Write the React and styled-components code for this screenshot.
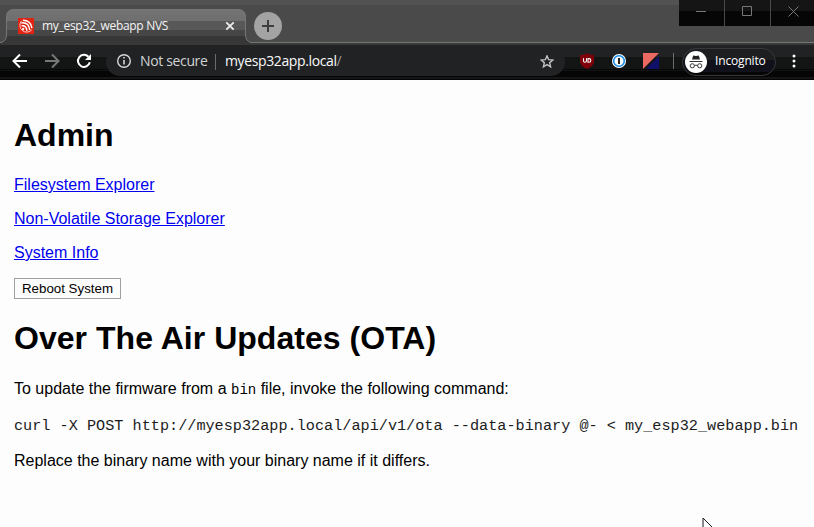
import React from "react";
import styled, { createGlobalStyle } from "styled-components";

const Global = createGlobalStyle`
  * { box-sizing: border-box; }
  body { margin: 0; background: #fdfdfd; overflow: hidden; font-family: "Liberation Sans", Arial, sans-serif; }
`;

const Window = styled.div`
  position: relative;
  display: flex;
  flex-direction: column;
  width: 814px;
  height: 527px;
  overflow: hidden;
`;
const TitleBar = styled.header`
  position: relative;
  display: flex;
  height: 45px;
  padding: 9px 0 0 6px;
  background: linear-gradient(#525252 0 5px, #4a4a4a 5px 42px, #757775 42px 43px, #383a39 43px 45px);
`;
const TabShape = styled.svg`
  position: absolute;
  left: 0;
  top: 0;
`;
const Tab = styled.div`
  position: relative;
  display: flex;
  align-items: center;
  width: 240px;
  height: 34px;
  padding: 0 10px 0 12px;
`;
const TabTitle = styled.span`
  flex: 1;
  margin-left: 8px;
  color: #f4f4f4;
  font: 12px/16px "Open Sans", "Noto Sans", sans-serif;
  letter-spacing: ${(p) => p.$spacing};
  white-space: nowrap;
`;
const NewTab = styled.div`
  display: flex;
  align-items: center;
  justify-content: center;
  width: 28px;
  height: 28px;
  margin: 3px 0 0 8px;
  border-radius: 50%;
  background: #a3a3a3;
`;
const WindowControls = styled.div`
  display: flex;
  gap: 1px;
  margin: -9px -2px 0 auto;
  height: 26px;
  background: #4a4a4a;
`;
const ControlButton = styled.div`
  display: flex;
  align-items: center;
  justify-content: center;
  width: 45px;
  padding-bottom: 3px;
  background: linear-gradient(#151515 0 11px, #060606 11px);
`;
const Toolbar = styled.nav`
  display: flex;
  align-items: center;
  height: 35px;
  padding: 0 12px 3px;
  background: linear-gradient(#202224 0 12px, #131414 12px 24px, #080808 24px 25px, #121212 25px 26px, #050505 26px 32px, #151515 32px 34px, #050505 34px);
`;
const NavIcon = styled.svg`
  flex: none;
  margin-right: ${(p) => p.$gap || "0"};
`;
const AddressBar = styled.div`
  display: flex;
  align-items: center;
  width: 459px;
  height: 28px;
  margin-top: 2px;
  padding: 0 11px 0 10px;
  border-radius: 14px;
  background: #202224;
  font: 14px/20px "Open Sans", "Noto Sans", sans-serif;
`;
const Security = styled.span`
  width: 75px;
  margin: -2px 0 0 8px;
  color: #d0d2d4;
  white-space: nowrap;
  letter-spacing: -0.35px;
`;
const Divider = styled.i`
  width: 1px;
  height: 16px;
  background: #6a6c6e;
`;
const Url = styled.span`
  flex: 1;
  margin: -2px 0 0 9px;
  color: #fafafa;
  letter-spacing: -0.38px;
  i { font-style: normal; color: #999; }
`;
const Extensions = styled.div`
  display: flex;
  align-items: center;
  height: 16px;
  margin: 0 0 0 14px;
`;
const Incognito = styled.div`
  display: flex;
  align-items: center;
  width: 94px;
  height: 28px;
  margin: 1px 16px 0 8px;
  padding-left: 2px;
  border: 1px solid #36383b;
  border-radius: 14px;
  background: linear-gradient(#1d1e20 0 11px, #10111a 11px 23px, #060606 23px);
  color: #fff;
  font: 12px/16px "Open Sans", "Noto Sans", sans-serif;
  span { margin: -2px 0 0 8px; letter-spacing: -0.16px; }
`;
const Page = styled.main`
  flex: 1;
  padding: 0 14px;
  background: #fdfdfd;
  color: #000;
  font-size: 16px;
  line-height: 18px;
`;
const Heading = styled.h1`
  margin: ${(p) => p.$margin};
  font-size: 32px;
  line-height: 37px;
  letter-spacing: ${(p) => p.$spacing || "0"};
`;
const Paragraph = styled.p`
  margin: 0 0 ${(p) => p.$gap || "16px"};
`;
const Link = styled.a`
  color: #0000ee;
  text-decoration: underline;
`;
const RebootButton = styled.button`
  display: block;
  width: 107px;
  height: 21px;
  padding: 0;
  border: 1px solid #a0a0a0;
  border-radius: 0;
  background: #fdfdfd;
  color: #000;
  font: 13.333px/17px "Liberation Sans", Arial, sans-serif;
`;
const Code = styled.code`
  font: 14px/16px "Liberation Mono", monospace;
`;
const Command = styled.pre`
  margin: 0 0 17px;
  color: #1c1c1c;
  font: 15.2px/17px "Liberation Mono", "Courier New", monospace;
  letter-spacing: 0.005px;
`;
const Pointer = styled.svg`
  position: absolute;
  left: 702px;
  top: 517px;
`;

const links = ["Filesystem Explorer", "Non-Volatile Storage Explorer", "System Info"];

const TAB_OUTLINE = "M0 42.5H1Q6.5 41 6.5 35V17Q6.5 9.5 14 9.5H238Q245.5 9.5 245.5 17V35Q245.5 41 251 42.5";

function TabBackground() {
  return (
    <TabShape width="254" height="45">
      <defs>
        <linearGradient id="bands" x1="0" y1="9" x2="0" y2="45" gradientUnits="userSpaceOnUse">
          <stop offset="0" stopColor="#747474" /><stop offset=".333" stopColor="#6e6e6e" />
          <stop offset=".333" stopColor="#585858" /><stop offset=".58" stopColor="#585858" />
          <stop offset=".58" stopColor="#464646" /><stop offset=".75" stopColor="#464646" />
          <stop offset=".75" stopColor="#373737" /><stop offset="1" stopColor="#373737" />
        </linearGradient>
      </defs>
      <path d={TAB_OUTLINE + "V45H0Z"} fill="url(#bands)" />
      <path d={TAB_OUTLINE} fill="none" stroke="#777" />
    </TabShape>
  );
}

function Favicon() {
  return (
    <NavIcon width="16" height="16" viewBox="0 0 16 16">
      <path d="M0 0h16v16H0z" fill="#df2414" />
      <g fill="none" stroke="#fff">
        <path d="M3.6 2.8A6.6 6.6 0 1 0 13.8 11.8" strokeWidth=".9" opacity=".85" />
        <path d="M5 2.3Q12.6 2.3 14 10.2M3.4 4.9Q10.9 4.2 11.7 12M3.6 7.7Q8.6 7.2 8.9 12.8" strokeWidth="1.5" />
        <circle cx="5.2" cy="11" r=".8" fill="#fff" />
      </g>
    </NavIcon>
  );
}

export default function App() {
  return (
    <>
      <Global />
      <Window>
        <TitleBar>
          <TabBackground />
          <Tab>
            <Favicon />
            <TabTitle $spacing="-0.3px">my_esp32_webapp NVS</TabTitle>
            <NavIcon width="12" height="12"><path d="M2.3 2.3l7.4 7.4M9.7 2.3L2.3 9.7" stroke="#eee" strokeWidth="1.8" /></NavIcon>
          </Tab>
          <NewTab><svg width="14" height="14"><path d="M7 1v12M1 7h12" stroke="#3d3d3d" strokeWidth="2" /></svg></NewTab>
          <WindowControls>
            <ControlButton><svg width="11" height="11"><path d="M0 5.5h10" stroke="#777" /></svg></ControlButton>
            <ControlButton><svg width="11" height="11"><path d="M.5.5h9v9h-9z" stroke="#777" fill="none" /></svg></ControlButton>
            <ControlButton><svg width="11" height="11"><path d="M.5.5l10 10M10.5.5l-10 10" stroke="#777" /></svg></ControlButton>
          </WindowControls>
        </TitleBar>
        <Toolbar>
          <NavIcon $gap="16px" width="16" height="16" viewBox="0 0 16 16"><path d="M15 8H2M8 1.5L1.5 8 8 14.5" fill="none" stroke="#fff" strokeWidth="2" /></NavIcon>
          <NavIcon $gap="16px" width="16" height="16" viewBox="0 0 16 16"><path d="M1 8h13M8 1.5L14.5 8 8 14.5" fill="none" stroke="#777" strokeWidth="2" /></NavIcon>
          <NavIcon $gap="14px" width="16" height="16" viewBox="0 0 16 16">
            <path d="M13.8 9.3A6 6 0 1 1 12.4 3.8" fill="none" stroke="#fff" strokeWidth="2" />
            <path d="M15 1v6H9z" fill="#fff" />
          </NavIcon>
          <AddressBar>
            <NavIcon width="16" height="16"><circle cx="8" cy="7" r="6.3" fill="none" stroke="#d4d6d8" strokeWidth="1.4" /><path d="M8 6v4.5M8 3v1.6" stroke="#d4d6d8" strokeWidth="1.6" /></NavIcon>
            <Security>Not secure</Security>
            <Divider />
            <Url>myesp32app.local<i>/</i></Url>
            <NavIcon width="14" height="14" viewBox="0 0 14 14"><path d="M7 .9l1.65 3.8 4.1.35-3.1 2.7.93 4L7 9.6l-3.58 2.15.93-4-3.1-2.7 4.1-.35z" fill="none" stroke="#c0c2c4" strokeWidth="1.4" /></NavIcon>
          </AddressBar>
          <Extensions>
            <NavIcon $gap="17px" width="16" height="16" viewBox="0 0 16 16">
              <path d="M8 0c2 1.5 4 2 7 2v6c0 4-3 6-7 8-4-2-7-4-7-8V2c3 0 5-.5 7-2z" fill="#800009" />
              <path d="M4.5 5.2v2.5q0 1.5 1.5 1.5t1.5-1.5V5.2" stroke="#fff" strokeWidth="1.1" fill="none" />
              <path d="M9 5.6h1q1.8 0 1.8 1.8T10 9.2H9z" stroke="#fff" strokeWidth="1.1" fill="none" />
            </NavIcon>
            <NavIcon $gap="17px" width="14" height="14" viewBox="0 0 14 14">
              <circle cx="7" cy="7" r="7" fill="#fff" /><circle cx="7" cy="7" r="5.3" fill="none" stroke="#168be8" strokeWidth="1.6" /><path d="M7 4v6" stroke="#222" strokeWidth="2" />
            </NavIcon>
            <NavIcon $gap="14px" width="16" height="16"><path d="M0 0h16L0 16z" fill="#ea6962" /><path d="M16 3v13H3z" fill="#10106c" /></NavIcon>
            <Divider />
          </Extensions>
          <Incognito>
            <svg width="22" height="22" viewBox="0 0 22 22">
              <circle cx="11" cy="11" r="11" fill="#fff" />
              <path d="M7 8.5l1.2-4 2.8.6 2.8-.6 1.2 4z" fill="#222" />
              <g fill="none" stroke="#333" strokeWidth="1"><path d="M4.5 10.5h13" /><circle cx="7.3" cy="14.8" r="2.1" /><circle cx="14.7" cy="14.8" r="2.1" /><path d="M9.4 14.5q1.6-.7 3.2 0" /></g>
            </svg>
            <span>Incognito</span>
          </Incognito>
          <NavIcon width="4" height="14" viewBox="0 0 4 14"><g fill="#fff"><circle cx="2" cy="2" r="1.5" /><circle cx="2" cy="7" r="1.5" /><circle cx="2" cy="12" r="1.5" /></g></NavIcon>
        </Toolbar>
        <Page>
          <Heading $margin="37px 0 22px">Admin</Heading>
          {links.map((label) => <Paragraph key={label}><Link>{label}</Link></Paragraph>)}
          <RebootButton>Reboot System</RebootButton>
          <Heading $margin="21px 0 23px" $spacing="0.03px">Over The Air Updates (OTA)</Heading>
          <Paragraph $gap="20px">To update the firmware from a <Code>bin</Code> file, invoke the following command:</Paragraph>
          <Command>{"curl -X POST http://myesp32app.local/api/v1/ota --data-binary @- < my_esp32_webapp.bin"}</Command>
          <Paragraph>Replace the binary name with your binary name if it differs.</Paragraph>
        </Page>
        <Pointer width="14" height="20"><path d="M1 1v17l4-4 3 6 3-1-3-6h5z" fill="#fff" stroke="#181820" /></Pointer>
      </Window>
    </>
  );
}
